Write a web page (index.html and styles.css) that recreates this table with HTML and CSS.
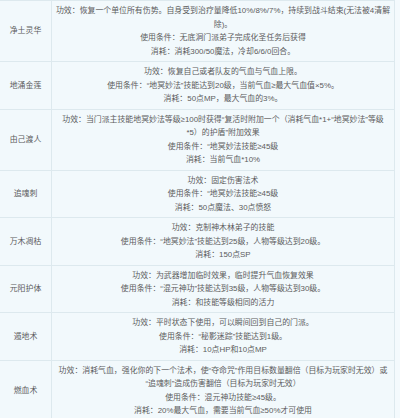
FILE: index.html
```html
<!DOCTYPE html>
<html lang="zh">
<head>
<meta charset="utf-8">
<link rel="stylesheet" href="styles.css">
</head>
<body>
<table class="skills">
  <colgroup>
    <col class="col-name">
    <col class="col-desc">
  </colgroup>
  <tr>
    <td class="name">净土灵华</td>
    <td class="desc">
      <p>功效：恢复一个单位所有伤势。自身受到治疗量降低10%/8%/7%，持续到战斗结束(无法被4清解<br>除)。</p>
      <p>使用条件：无底洞门派弟子完成化圣任务后获得</p>
      <p>消耗：消耗300/50魔法，冷却6/6/0回合。</p>
    </td>
  </tr>
  <tr>
    <td class="name">地涌金莲</td>
    <td class="desc">
      <p>功效：恢复自己或者队友的气血与气血上限。</p>
      <p>使用条件：“地冥妙法”技能达到20级，当前气血≥最大气血值×5%。</p>
      <p>消耗：50点MP，最大气血的3%。</p>
    </td>
  </tr>
  <tr>
    <td class="name">由己渡人</td>
    <td class="desc">
      <p>功效：当门派主技能地冥妙法等级≥100时获得“复活时附加一个（消耗气血*1+“地冥妙法”等级<br>*5）的护盾”附加效果</p>
      <p>使用条件：“地冥妙法技能≥45级</p>
      <p>消耗：当前气血*10%</p>
    </td>
  </tr>
  <tr>
    <td class="name">追魂刺</td>
    <td class="desc">
      <p>功效：固定伤害法术</p>
      <p>使用条件：“地冥妙法技能≥45级</p>
      <p>消耗：50点魔法、30点愤怒</p>
    </td>
  </tr>
  <tr>
    <td class="name">万木凋枯</td>
    <td class="desc">
      <p>功效：克制神木林弟子的技能</p>
      <p>使用条件：“地冥妙法”技能达到25级，人物等级达到20级。</p>
      <p>消耗：150点SP</p>
    </td>
  </tr>
  <tr>
    <td class="name">元阳护体</td>
    <td class="desc">
      <p>功效：为武器增加临时效果，临时提升气血恢复效果</p>
      <p>使用条件：“混元神功”技能达到35级，人物等级达到30级。</p>
      <p>消耗：和技能等级相同的活力</p>
    </td>
  </tr>
  <tr>
    <td class="name">遁地术</td>
    <td class="desc">
      <p>功效：平时状态下使用，可以瞬间回到自己的门派。</p>
      <p>使用条件：“秘影迷踪”技能达到1级。</p>
      <p>消耗：10点HP和10点MP</p>
    </td>
  </tr>
  <tr>
    <td class="name">燃血术</td>
    <td class="desc">
      <p>功效：消耗气血，强化你的下一个法术，使“夺命咒”作用目标数量翻倍（目标为玩家时无效）或<br>“追魂刺”造成伤害翻倍（目标为玩家时无效）</p>
      <p>使用条件：混元神功技能≥45级。</p>
      <p>消耗：20%最大气血，需要当前气血≥50%才可使用</p>
    </td>
  </tr>
</table>
</body>
</html>
```
FILE: styles.css
```css
html, body {
  margin: 0;
  padding: 0;
  background: #f4fafd;
}

.skills {
  border-collapse: collapse;
  table-layout: fixed;
  width: 396px;
  margin-left: -1px;
  background: #f2f9fc;
  font-family: "Liberation Sans", "Noto Sans CJK SC", sans-serif;
  font-size: 7.9px;
  line-height: 13.5px;
  color: #5c5c5c;
}

.col-name {
  width: 52px;
}

.skills td {
  border: 1px solid #dde9ee;
  text-align: center;
  vertical-align: middle;
  padding: 3px 2px;
}

.skills .desc {
  white-space: nowrap;
}

.skills .desc p {
  margin: 0;
}
```
